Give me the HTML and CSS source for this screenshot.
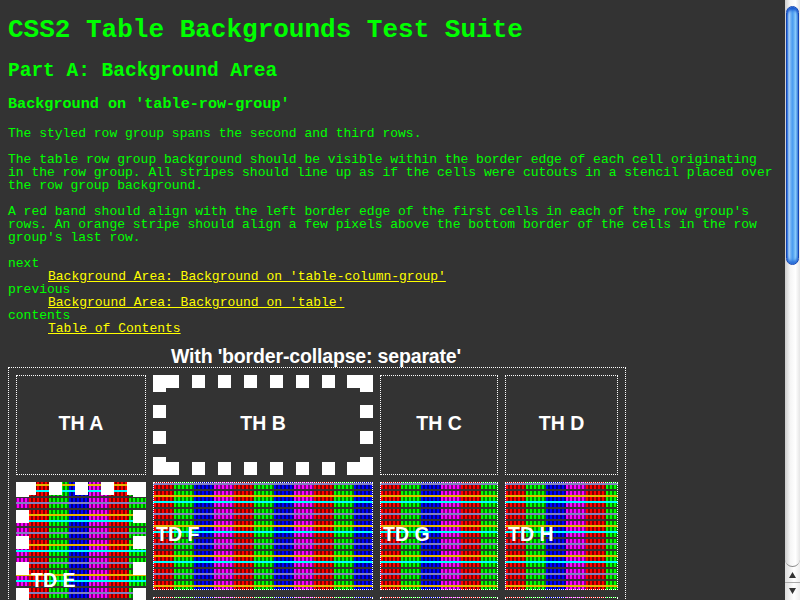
FILE: index.html
```html
<!DOCTYPE html>
<html lang="en">
<head>
<meta charset="utf-8">
<title>CSS2 Table Backgrounds Test Suite</title>
<link rel="stylesheet" href="styles.css">
</head>
<body>
<main class="page">
<h1>CSS2 Table Backgrounds Test Suite</h1>
<h2>Part A: Background Area</h2>
<h3>Background on 'table-row-group'</h3>
<p>The styled row group spans the second and third rows.</p>
<p>The table row group background should be visible within the border edge of each cell originating in the row group. All stripes should line up as if the cells were cutouts in a stencil placed over the row group background.</p>
<p>A red band should align with the left border edge of the first cells in each of the row group's rows. An orange stripe should align a few pixels above the bottom border of the cells in the row group's last row.</p>
<dl>
<dt>next</dt><dd><a href="#">Background Area: Background on 'table-column-group'</a></dd>
<dt>previous</dt><dd><a href="#">Background Area: Background on 'table'</a></dd>
<dt>contents</dt><dd><a href="#">Table of Contents</a></dd>
</dl>
<div class="caption">With 'border-collapse: separate'</div>
<div class="table">
<div class="cell th">TH A</div>
<div class="cell th thick">TH B
<svg class="dashes" width="220" height="100" fill="#fff" shape-rendering="crispEdges"><path d="M0 0h26v13H13v4H0zM39 0h13v13H39zM65 0h13v13H65zM91 0h13v13H91zM117 0h13v13h-13zM143 0h13v13h-13zM169 0h13v13h-13zM207 0h13v17h-13zM207 0v13h-13V0zM0 30h13v13H0zM0 56h13v13H0zM207 30h13v13h-13zM207 56h13v13h-13zM0 82h13v5h13v13H0zM39 87h13v13H39zM65 87h13v13H65zM91 87h13v13H91zM117 87h13v13h-13zM143 87h13v13h-13zM169 87h13v13h-13zM220 82v18h-26V87h13v-5z"/></svg></div>
<div class="cell th">TH C</div>
<div class="cell th">TH D</div>
<div class="cell td thick striped tall"><span>TD E</span>
<svg class="dashes" width="130" height="130" fill="#fff" shape-rendering="crispEdges"><path d="M0 0h20v13h-7v2H0zM33 0h13v13H33zM59 0h13v13H59zM85 0h13v13H85zM111 0h19v15h-13v-2h-6zM0 28h13v13H0zM0 54h13v13H0zM0 80h13v13H0zM0 106h13v13H0zM117 28h13v13h-13zM117 54h13v13h-13zM117 80h13v13h-13zM117 106h13v13h-13z"/></svg></div>
<div class="cell td striped">TD F</div>
<div class="cell td striped">TD G</div>
<div class="cell td striped">TD H</div>
<div class="cell striped last"></div>
<div class="cell striped last"></div>
<div class="cell striped last"></div>
</div>
</main>
<div class="scrollbar">
<div class="track"><div class="thumb"></div></div>
<div class="arrows"><svg width="15" height="32"><path d="M4 11 7.5 5l3.5 6zM4 21h7l-3.5 6z" fill="#333"/><path d="M0 15.5h15" stroke="#aaa"/></svg></div>
</div>
</body>
</html>
```
FILE: styles.css
```css
html, body { margin: 0; height: 600px; overflow: hidden; }
body { display: flex; background: #333; color: #0f0; font: 13px/13px "Liberation Mono", monospace; }
.page { box-sizing: border-box; width: 785px; height: 600px; padding: 17px 8px 0; overflow: hidden; }
h1 { margin: 0; font-size: 26px; line-height: 26px; }
h2 { margin: 18px 0 0; font-size: 19.5px; line-height: 20px; }
h3 { margin: 15px 0 0; font-size: 15.15px; line-height: 16px; }
p { margin: 15px 0 0; }
p + p { margin-top: 13px; }
dl { margin: 13px 0 0; }
dd { margin: 0 0 0 40px; }
a { color: #ff0; }
.caption { width: 616px; margin-top: 11px; height: 21px; text-align: center; color: #fff; font: bold 19.5px/20px "Liberation Sans", sans-serif; letter-spacing: -.16px; white-space: nowrap; }
.table {
  box-sizing: border-box; width: 618px; height: 320px; padding: 7px;
  display: grid; grid-template-columns: 130px 220px 118px 113px; grid-template-rows: 100px 108px 90px; gap: 7px;
  border: 1px dotted #fff; color: #fff; font: bold 19.5px/20px "Liberation Sans", sans-serif;
}
.cell { box-sizing: border-box; position: relative; display: flex; align-items: center; padding-bottom: 4px; border: 1px dotted #fff; }
.th { justify-content: center; }
.td { padding-left: 2px; }
.thick { border: 13px solid transparent; }
.dashes { position: absolute; top: -13px; left: -13px; }
.tall { grid-row: span 2; padding-bottom: 10px; }
.striped {
  background-image:
    linear-gradient(#8080c0 0 2px, transparent 2px 6px, #333 6px 8px, transparent 8px 12px, #e6b800 12px 14px, transparent 14px 18px, #0ff 18px 20px, transparent 20px 24px, #333 24px 26px, transparent 26px),
    repeating-linear-gradient(90deg, transparent 0 2px, rgba(0, 0, 0, .5) 2px 4px),
    linear-gradient(90deg, #f00 0 20px, #0f0 20px 40px, #00f 40px 60px, #f0f 60px);
  background-size: 80px 30px;
}
.striped.tall { background-position: 0 7px; }
.striped.last { background-position: 0 -6px; }
.scrollbar { width: 15px; height: 600px; display: flex; flex-direction: column; background: linear-gradient(90deg, #ddd, #fff 60%, #eee); }
.track { height: 567px; box-sizing: border-box; padding: 6px 1px 0; border-bottom: 1px solid #888; border-radius: 0 0 8px 8px; background: linear-gradient(90deg, #ccc, #f5f5f5 35%, #fff 70%, #e5e5e5); }
.thumb { height: 259px; box-sizing: border-box; border: 1px solid #1546b4; border-radius: 7px; background: linear-gradient(90deg, #246bd8, #b1d5fa 18%, #69aef3 36%, #4a9cf0 52%, #88cafb 78%, #4b8fdd); box-shadow: inset 0 4px 3px -1px #1857cf, inset 0 -4px 3px -1px #2c70d8; }
.arrows { height: 32px; }
.arrows svg { display: block; }
```
